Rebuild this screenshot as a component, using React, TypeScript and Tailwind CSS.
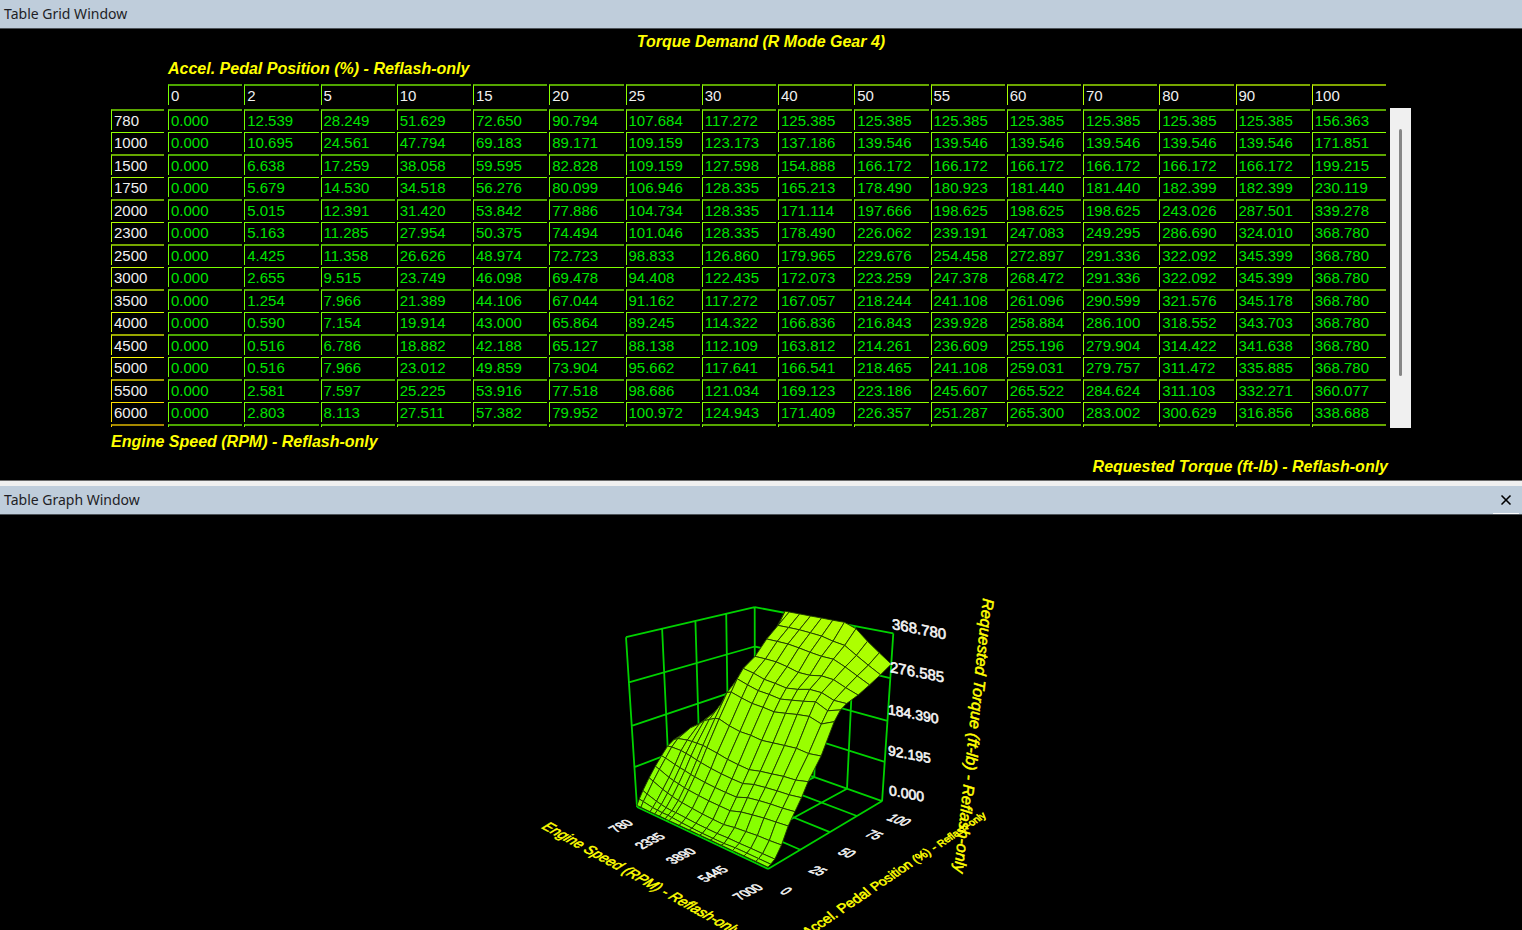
/**
 * @component App
 * Table editor: data grid on top, 3D surface of the same table below
 */

import { X } from 'lucide-react'

const PEDAL = [0, 2, 5, 10, 15, 20, 25, 30, 40, 50, 55, 60, 70, 80, 90, 100]

const ROWS: { rpm: number; values: number[] }[] = [
  { rpm: 780, values: [0, 12.539, 28.249, 51.629, 72.65, 90.794, 107.684, 117.272, 125.385, 125.385, 125.385, 125.385, 125.385, 125.385, 125.385, 156.363] },
  { rpm: 1000, values: [0, 10.695, 24.561, 47.794, 69.183, 89.171, 109.159, 123.173, 137.186, 139.546, 139.546, 139.546, 139.546, 139.546, 139.546, 171.851] },
  { rpm: 1500, values: [0, 6.638, 17.259, 38.058, 59.595, 82.828, 109.159, 127.598, 154.888, 166.172, 166.172, 166.172, 166.172, 166.172, 166.172, 199.215] },
  { rpm: 1750, values: [0, 5.679, 14.53, 34.518, 56.276, 80.099, 106.946, 128.335, 165.213, 178.49, 180.923, 181.44, 181.44, 182.399, 182.399, 230.119] },
  { rpm: 2000, values: [0, 5.015, 12.391, 31.42, 53.842, 77.886, 104.734, 128.335, 171.114, 197.666, 198.625, 198.625, 198.625, 243.026, 287.501, 339.278] },
  { rpm: 2300, values: [0, 5.163, 11.285, 27.954, 50.375, 74.494, 101.046, 128.335, 178.49, 226.062, 239.191, 247.083, 249.295, 286.69, 324.01, 368.78] },
  { rpm: 2500, values: [0, 4.425, 11.358, 26.626, 48.974, 72.723, 98.833, 126.86, 179.965, 229.676, 254.458, 272.897, 291.336, 322.092, 345.399, 368.78] },
  { rpm: 3000, values: [0, 2.655, 9.515, 23.749, 46.098, 69.478, 94.408, 122.435, 172.073, 223.259, 247.378, 268.472, 291.336, 322.092, 345.399, 368.78] },
  { rpm: 3500, values: [0, 1.254, 7.966, 21.389, 44.106, 67.044, 91.162, 117.272, 167.057, 218.244, 241.108, 261.096, 290.599, 321.576, 345.178, 368.78] },
  { rpm: 4000, values: [0, 0.59, 7.154, 19.914, 43, 65.864, 89.245, 114.322, 166.836, 216.843, 239.928, 258.884, 286.1, 318.552, 343.703, 368.78] },
  { rpm: 4500, values: [0, 0.516, 6.786, 18.882, 42.188, 65.127, 88.138, 112.109, 163.812, 214.261, 236.609, 255.196, 279.904, 314.422, 341.638, 368.78] },
  { rpm: 5000, values: [0, 0.516, 7.966, 23.012, 49.859, 73.904, 95.662, 117.641, 166.541, 218.465, 241.108, 259.031, 279.757, 311.472, 335.885, 368.78] },
  { rpm: 5500, values: [0, 2.581, 7.597, 25.225, 53.916, 77.518, 98.686, 121.034, 169.123, 223.186, 245.607, 265.522, 284.624, 311.103, 332.271, 360.077] },
  { rpm: 6000, values: [0, 2.803, 8.113, 27.511, 57.382, 79.952, 100.972, 124.943, 171.409, 226.357, 251.287, 265.3, 283.002, 300.629, 316.856, 338.688] },
  { rpm: 6500, values: [0, 2.803, 8.2, 28.4, 59.5, 81.5, 102.5, 126.5, 168.9, 218.4, 240.1, 256.2, 272.8, 288.4, 302.2, 320.1] },
  { rpm: 7000, values: [0, 2.877, 8.5, 30.2, 62.1, 84.4, 106.2, 132.4, 172.3, 230.4, 248.9, 256.8, 264.5, 276.1, 288.3, 302.2] },
]

// Rows that fit in the grid without scrolling
const VISIBLE_ROWS = 14

const MAX_TORQUE = 368.78

// Color scale: green -> lime -> yellow -> gold
function heat(t: number, dim = false) {
  const k = dim ? 0.65 : 1
  const r = Math.min(255, 118 + 180 * t)
  const g = t > 0.7 ? 255 - 200 * (t - 0.7) : 255
  return `rgb(${Math.round(r * k)}, ${Math.round(g * k)}, 0)`
}

export default function App() {
  return (
    <div className="flex min-h-screen flex-col bg-black font-['Liberation_Sans',Arial,sans-serif]">
      <WindowBar title="Table Grid Window" />
      <GridPanel />
      <div className="h-[6px] border-t border-[#6b6b6b] bg-[#f0f0f0]" />
      <WindowBar title="Table Graph Window" closable />
      <SurfaceChart />
    </div>
  )
}

function WindowBar({ title, closable = false }: { title: string; closable?: boolean }) {
  return (
    <header className="flex h-[29px] items-center justify-between border-b border-[#4d5359] bg-[#bfcddb] pl-1 pr-[3px]">
      <h2 className="font-['Noto_Sans','Open_Sans',sans-serif] text-[14px] leading-5 text-[#1e1e26]">{title}</h2>
      {closable && (
        <button
          aria-label="Close"
          className="flex h-full w-[26px] items-center justify-center border-b border-white text-black"
        >
          <X size={16} strokeWidth={2.5} />
        </button>
      )}
    </header>
  )
}

function AxisTitle({ children, className = '' }: { children: React.ReactNode; className?: string }) {
  return <p className={`text-[16px] font-bold italic leading-[25px] text-[#ffff00] ${className}`}>{children}</p>
}

function GridPanel() {
  return (
    <main className="px-[111px]">
      <AxisTitle className="text-center">Torque Demand (R Mode Gear 4)</AxisTitle>
      <AxisTitle className="pl-[57px] pt-[2px]">Accel. Pedal Position (%) - Reflash-only</AxisTitle>

      <div className="mt-[3px] flex h-[344px] items-start overflow-hidden">
        <div className="min-w-0 flex-1">
          <table className="w-full table-fixed border-separate border-spacing-0">
            <colgroup>
              <col className="w-[57px]" />
              {PEDAL.map((p) => (
                <col key={p} />
              ))}
            </colgroup>
            <thead>
              <tr>
                <td />
                {PEDAL.map((p) => (
                  <th key={p} scope="col" className="pb-[4px] pl-0 pr-[2px] pt-0 text-left font-normal">
                    <div
                      className="h-[21px] border-l border-t-2 pl-[2px] text-[15px] leading-[20px] text-[#f0f0f0]"
                      style={{ borderLeftColor: heat(p / 220), borderTopColor: heat(p / 220, true) }}
                    >
                      {p}
                    </div>
                  </th>
                ))}
              </tr>
            </thead>
            <tbody>
              {ROWS.slice(0, VISIBLE_ROWS).map((row, i) => (
                <GridRow key={row.rpm} rpm={row.rpm} values={row.values} even={i % 2 === 0} />
              ))}
              <PartialRow rpm={ROWS[VISIBLE_ROWS].rpm} values={ROWS[VISIBLE_ROWS].values} />
            </tbody>
          </table>
        </div>
        <div className="ml-[2px] mt-[24px] flex h-[320px] w-[21px] justify-center bg-[#f0f0f0] pt-[21px]">
          <div className="h-[247px] w-[3px] rounded bg-[#868686]" />
        </div>
      </div>

      <AxisTitle className="pt-px">Engine Speed (RPM) - Reflash-only</AxisTitle>
      <AxisTitle className="pb-px pr-[23px] text-right">Requested Torque (ft-lb) - Reflash-only</AxisTitle>
    </main>
  )
}

function GridRow({ rpm, values, even }: { rpm: number; values: number[]; even: boolean }) {
  const box = even
    ? 'h-[21px] border-l border-t-2 pl-[2px] text-[15px] leading-[20px]'
    : 'h-[20px] border-l border-t pl-[2px] text-[15px] leading-[20px]'

  return (
    <tr>
      <th scope="row" className="pb-[2px] pl-0 pr-[4px] pt-0 text-left font-normal">
        <div
          className={`${box} text-[#f0f0f0]`}
          style={{ borderLeftColor: heat(rpm / 7000), borderTopColor: heat(rpm / 7000, even) }}
        >
          {rpm}
        </div>
      </th>
      {values.map((v, i) => (
        <td key={PEDAL[i]} className="pb-[2px] pl-0 pr-[2px] pt-0">
          <div
            className={`${box} text-[#00e400]`}
            style={{ borderLeftColor: heat(v / 1400), borderTopColor: heat(v / 1400, even) }}
          >
            {v.toFixed(3)}
          </div>
        </td>
      ))}
    </tr>
  )
}

// Top edge of the next row, below the fold
function PartialRow({ rpm, values }: { rpm: number; values: number[] }) {
  return (
    <tr aria-hidden="true">
      <td className="p-0 pr-[4px]">
        <div
          className="h-[3px] border-l border-t-2"
          style={{ borderLeftColor: heat(rpm / 7000), borderTopColor: heat(rpm / 7000, true) }}
        />
      </td>
      {values.map((v, i) => (
        <td key={PEDAL[i]} className="p-0 pr-[2px]">
          <div
            className="h-[3px] border-l border-t-2"
            style={{ borderLeftColor: heat(v / 1400), borderTopColor: heat(v / 1400, true) }}
          />
        </td>
      ))}
    </tr>
  )
}

// Perspective projection of the unit box (rpm, pedal, torque) onto the chart
function project(a: number, p: number, t: number) {
  const w = 1 - 0.143 * a + 0.158 * p - 0.084 * t
  const x = (-124 + 130 * a + 116.9 * p + 0.3 * t) / w
  const y = (292 + 11.3 * a - 12.9 * p - 180.2 * t) / w
  return `${x.toFixed(1)},${y.toFixed(1)}`
}

type Point = [number, number, number]

const line = (from: Point, to: Point) => `M${project(...from)}L${project(...to)}`

const STEPS = [0, 0.25, 0.5, 0.75, 1]

const BOX_LINES = STEPS.flatMap((s) => [
  // Left wall
  line([0, s, 0], [0, s, 1]),
  line([0, 0, s], [0, 1, s]),
  // Back wall
  line([s, 1, 0], [s, 1, 1]),
  line([0, 1, s], [1, 1, s]),
  // Floor
  line([s, 0, 0], [s, 1, 0]),
  line([0, s, 0], [1, s, 0]),
]).join('')

const rpmPos = (rpm: number) => (rpm - 780) / 6220

// Far cells first, so that near ones cover them
function surfaceCells() {
  const cells: { points: string; fill: string }[] = []
  for (let i = 0; i < ROWS.length - 1; i++) {
    for (let j = PEDAL.length - 2; j >= 0; j--) {
      const corners = [[i, j], [i + 1, j], [i + 1, j + 1], [i, j + 1]]
      const level = ROWS[i].values[j] / MAX_TORQUE
      cells.push({
        points: corners
          .map(([r, c]) => project(rpmPos(ROWS[r].rpm), PEDAL[c] / 100, ROWS[r].values[c] / MAX_TORQUE + 0.01))
          .join(' '),
        fill: `rgb(${Math.round(132 + 46 * level)}, 255, 0)`,
      })
    }
  }
  return cells
}

const RPM_LABELS = [
  { text: '780', x: -140, y: 311 },
  { text: '2335', x: -111, y: 326 },
  { text: '3890', x: -80, y: 341 },
  { text: '5445', x: -48, y: 359 },
  { text: '7000', x: -13, y: 377 },
]

const PEDAL_LABELS = [
  { text: '0', x: 25, y: 376 },
  { text: '25', x: 57, y: 356 },
  { text: '50', x: 86, y: 338 },
  { text: '75', x: 113, y: 320 },
  { text: '100', x: 138, y: 305 },
]

const TORQUE_LABELS = [
  { text: '368.780', x: 131, y: 114, size: 'text-[15px]' },
  { text: '276.585', x: 129, y: 157, size: 'text-[15px]' },
  { text: '184.390', x: 127, y: 199, size: 'text-[14px]' },
  { text: '92.195', x: 127, y: 240, size: 'text-[14px]' },
  { text: '0.000', x: 128, y: 280, size: 'text-[14px]' },
]

function SurfaceChart() {
  return (
    <svg
      viewBox="-761 0 1522 415"
      preserveAspectRatio="xMidYMin slice"
      className="h-[415px] w-full"
      role="img"
      aria-label="Torque Demand surface"
    >
      <path d={BOX_LINES} stroke="#00d200" strokeWidth={1.8} fill="none" />
      <g stroke="#1c3800" strokeWidth={0.9} strokeLinejoin="round">
        {surfaceCells().map((cell, i) => (
          <polygon key={i} points={cell.points} fill={cell.fill} />
        ))}
      </g>

      <g fill="#f4f4f4" stroke="#f4f4f4" strokeWidth={0.6}>
        {RPM_LABELS.map((l) => (
          <text key={l.text} transform={`translate(${l.x} ${l.y}) rotate(-27) skewX(34)`} y={4} textAnchor="middle" className="text-[12px]">
            {l.text}
          </text>
        ))}
        {PEDAL_LABELS.map((l) => (
          <text key={l.text} transform={`translate(${l.x} ${l.y}) rotate(20) skewX(-34)`} y={4} textAnchor="middle" className="text-[12px]">
            {l.text}
          </text>
        ))}
        {TORQUE_LABELS.map((l) => (
          <text key={l.text} transform={`translate(${l.x} ${l.y}) skewY(11)`} className={l.size}>
            {l.text}
          </text>
        ))}
      </g>

      <g fill="#ffff00" stroke="#ffff00" strokeWidth={0.5} className="italic">
        <text transform="translate(-220 313) rotate(29) skewX(-20)" className="text-[14px]">
          Engine Speed (RPM) - Reflash-only
        </text>
        <text transform="translate(47 422) rotate(-34) skewX(20)" className="text-[14px]">
          Accel. Pedal <tspan className="text-[13px]">Position </tspan>
          <tspan className="text-[12px]">(%) - </tspan>
          <tspan className="text-[10px]">Reflash-only</tspan>
        </text>
        <text transform="translate(222 83) rotate(96)" className="text-[16px]">
          Requested Torque (ft-lb) - Reflash-only
        </text>
      </g>
    </svg>
  )
}
